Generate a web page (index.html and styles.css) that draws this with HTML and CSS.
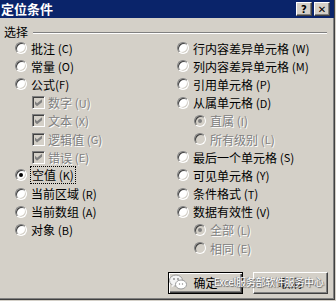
FILE: index.html
```html
<!DOCTYPE html>
<html lang="zh-CN">
<head>
  <meta charset="UTF-8">
  <meta name="viewport" content="width=device-width, initial-scale=1.0">
  <title>定位条件</title>
  <link rel="stylesheet" href="styles.css">
</head>
<body>
  <div class="dialog">
    <div class="titlebar">
      <span class="title">定位条件</span>
      <div class="caption-buttons">
        <button class="cap">?</button>
        <button class="cap close">✕</button>
      </div>
    </div>

    <div class="group">
      <span class="group-label">选择</span>
      <span class="group-line"></span>
    </div>

    <div class="columns">
      <ul class="options">
        <li><span class="radio"></span>批注 (<u>C</u>)</li>
        <li><span class="radio"></span>常量 (<u>O</u>)</li>
        <li><span class="radio"></span>公式(<u>F</u>)</li>
        <li class="sub off"><span class="check"></span>数字 (<u>U</u>)</li>
        <li class="sub off"><span class="check"></span>文本 (<u>X</u>)</li>
        <li class="sub off"><span class="check"></span>逻辑值 (<u>G</u>)</li>
        <li class="sub off"><span class="check"></span>错误 (<u>E</u>)</li>
        <li><span class="radio on"></span><span class="focus">空值 (<u>K</u>)</span></li>
        <li><span class="radio"></span>当前区域 (<u>R</u>)</li>
        <li><span class="radio"></span>当前数组 (<u>A</u>)</li>
        <li><span class="radio"></span>对象 (<u>B</u>)</li>
      </ul>
      <ul class="options">
        <li><span class="radio"></span>行内容差异单元格 (<u>W</u>)</li>
        <li><span class="radio"></span>列内容差异单元格 (<u>M</u>)</li>
        <li><span class="radio"></span>引用单元格 (<u>P</u>)</li>
        <li><span class="radio"></span>从属单元格 (<u>D</u>)</li>
        <li class="sub off"><span class="radio on"></span>直属 (<u>I</u>)</li>
        <li class="sub off"><span class="radio"></span>所有级别 (<u>L</u>)</li>
        <li><span class="radio"></span>最后一个单元格 (<u>S</u>)</li>
        <li><span class="radio"></span>可见单元格 (<u>Y</u>)</li>
        <li><span class="radio"></span>条件格式 (<u>T</u>)</li>
        <li><span class="radio"></span>数据有效性 (<u>V</u>)</li>
        <li class="sub off"><span class="radio on"></span>全部 (<u>L</u>)</li>
        <li class="sub off"><span class="radio"></span>相同 (<u>E</u>)</li>
      </ul>
    </div>

    <div class="actions">
      <button class="btn default">确定</button>
      <button class="btn">取消</button>
      <div class="watermark">
        <svg width="18" height="16" viewBox="0 0 18 16">
          <ellipse cx="7" cy="6.5" rx="6.5" ry="5.5" fill="#f4f4f4" stroke="#9a9a9a"/>
          <path d="M3 10.5 L2.5 13.5 L6 11.5 Z" fill="#f4f4f4"/>
          <ellipse cx="12" cy="10.5" rx="5.5" ry="4.5" fill="#ffffff" stroke="#9a9a9a"/>
          <circle cx="5" cy="5" r="0.9" fill="#888"/>
          <circle cx="9" cy="5" r="0.9" fill="#888"/>
          <circle cx="10.5" cy="10" r="0.7" fill="#888"/>
          <circle cx="13.5" cy="10" r="0.7" fill="#888"/>
        </svg>
        <span>Excel服务部软件服务中心</span>
      </div>
    </div>
  </div>
</body>
</html>
```

FILE: styles.css
```css
* {
  box-sizing: border-box;
  padding: 0;
  margin: 0;
}
body {
  background: #d4d0c8;
  color: #000;
  font-family: "Noto Sans CJK SC", "DejaVu Sans", sans-serif;
  font-size: 12px;
}

.dialog {
  position: relative;
  width: 335px;
  height: 300px;
  background: #d4d0c8;
  border-right: 1px solid #404040;
  border-bottom: 1px solid #404040;
  box-shadow: inset -1px -1px #808080;
}

.titlebar {
  display: flex;
  align-items: center;
  justify-content: space-between;
  height: 18px;
  padding: 0 4px 0 1px;
  background: #0a246a;
  color: #fff;
}
.title {
  font-size: 13px;
  font-weight: bold;
  line-height: 18px;
}
.caption-buttons {
  display: flex;
  gap: 2px;
}
.cap {
  width: 16px;
  height: 14px;
  background: #d4d0c8;
  border: 1px solid;
  border-color: #fff #404040 #404040 #fff;
  box-shadow: inset -1px -1px #808080;
  font-family: "DejaVu Sans", sans-serif;
  font-size: 10px;
  font-weight: bold;
  line-height: 11px;
  color: #000;
}

.group {
  display: flex;
  align-items: center;
  height: 15px;
  margin-top: 6px;
  padding: 0 7px 0 4px;
}
.group-label {
  line-height: 15px;
}
.group-line {
  flex: 1;
  margin-left: 5px;
  margin-top: 2px;
  border-top: 1px solid #808080;
  border-bottom: 1px solid #fff;
}

.columns {
  display: grid;
  grid-template-columns: 162px 1fr;
  padding-left: 15px;
}
.options {
  list-style: none;
}
.options li {
  display: flex;
  align-items: center;
  height: 18.2px;
  white-space: nowrap;
}
.options li.sub {
  padding-left: 17px;
}
.options li.off {
  color: #808080;
  text-shadow: 1px 1px #fff;
}
u {
  text-decoration: none;
  font-size: 11px;
}

.radio {
  position: relative;
  width: 12px;
  height: 12px;
  margin-right: 4px;
  border-radius: 50%;
  background: #fff;
  border: 1px solid;
  border-color: #808080 #fff #fff #808080;
  box-shadow: inset 1px 1px #404040, inset -1px -1px #d4d0c8;
}
.radio.on::after {
  content: "";
  position: absolute;
  left: 3px;
  top: 3px;
  width: 4px;
  height: 4px;
  border-radius: 50%;
  background: #000;
}
.off .radio {
  background: #d4d0c8;
}
.off .radio.on::after {
  background: #808080;
}

.check {
  position: relative;
  width: 13px;
  height: 13px;
  margin-right: 3px;
  background: #d4d0c8;
  border: 1px solid;
  border-color: #808080 #fff #fff #808080;
  box-shadow: inset 1px 1px #404040, inset -1px -1px #d4d0c8;
}
.check::after {
  content: "";
  position: absolute;
  left: 2px;
  top: 2px;
  width: 7px;
  height: 7px;
  background: #808080;
  clip-path: polygon(0 29%, 29% 57%, 100% 0, 100% 43%, 29% 100%, 0 71%);
}

.focus {
  padding: 0 1px;
  outline: 1px dotted #000;
  line-height: 15px;
}

.actions {
  position: relative;
  display: flex;
  gap: 10px;
  margin-top: 14.6px;
  padding-left: 168px;
}
.btn {
  width: 75px;
  height: 22px;
  background: #d4d0c8;
  border: 1px solid;
  border-color: #fff #404040 #404040 #fff;
  box-shadow: inset -1px -1px #808080;
  font-family: inherit;
  font-size: 12px;
  color: #000;
}
.btn.default {
  border: 1px solid #000;
  box-shadow: inset 1px 1px #fff, inset -1px -1px #404040, inset -2px -2px #808080;
}

.watermark {
  position: absolute;
  left: 169px;
  top: 2px;
  display: flex;
  align-items: center;
  gap: 27px;
  color: #fff;
  font-size: 10px;
  letter-spacing: -0.3px;
  text-shadow: 1px 1px 1px #5a5a5a, -1px 0 1px #7a7a7a;
}
```
